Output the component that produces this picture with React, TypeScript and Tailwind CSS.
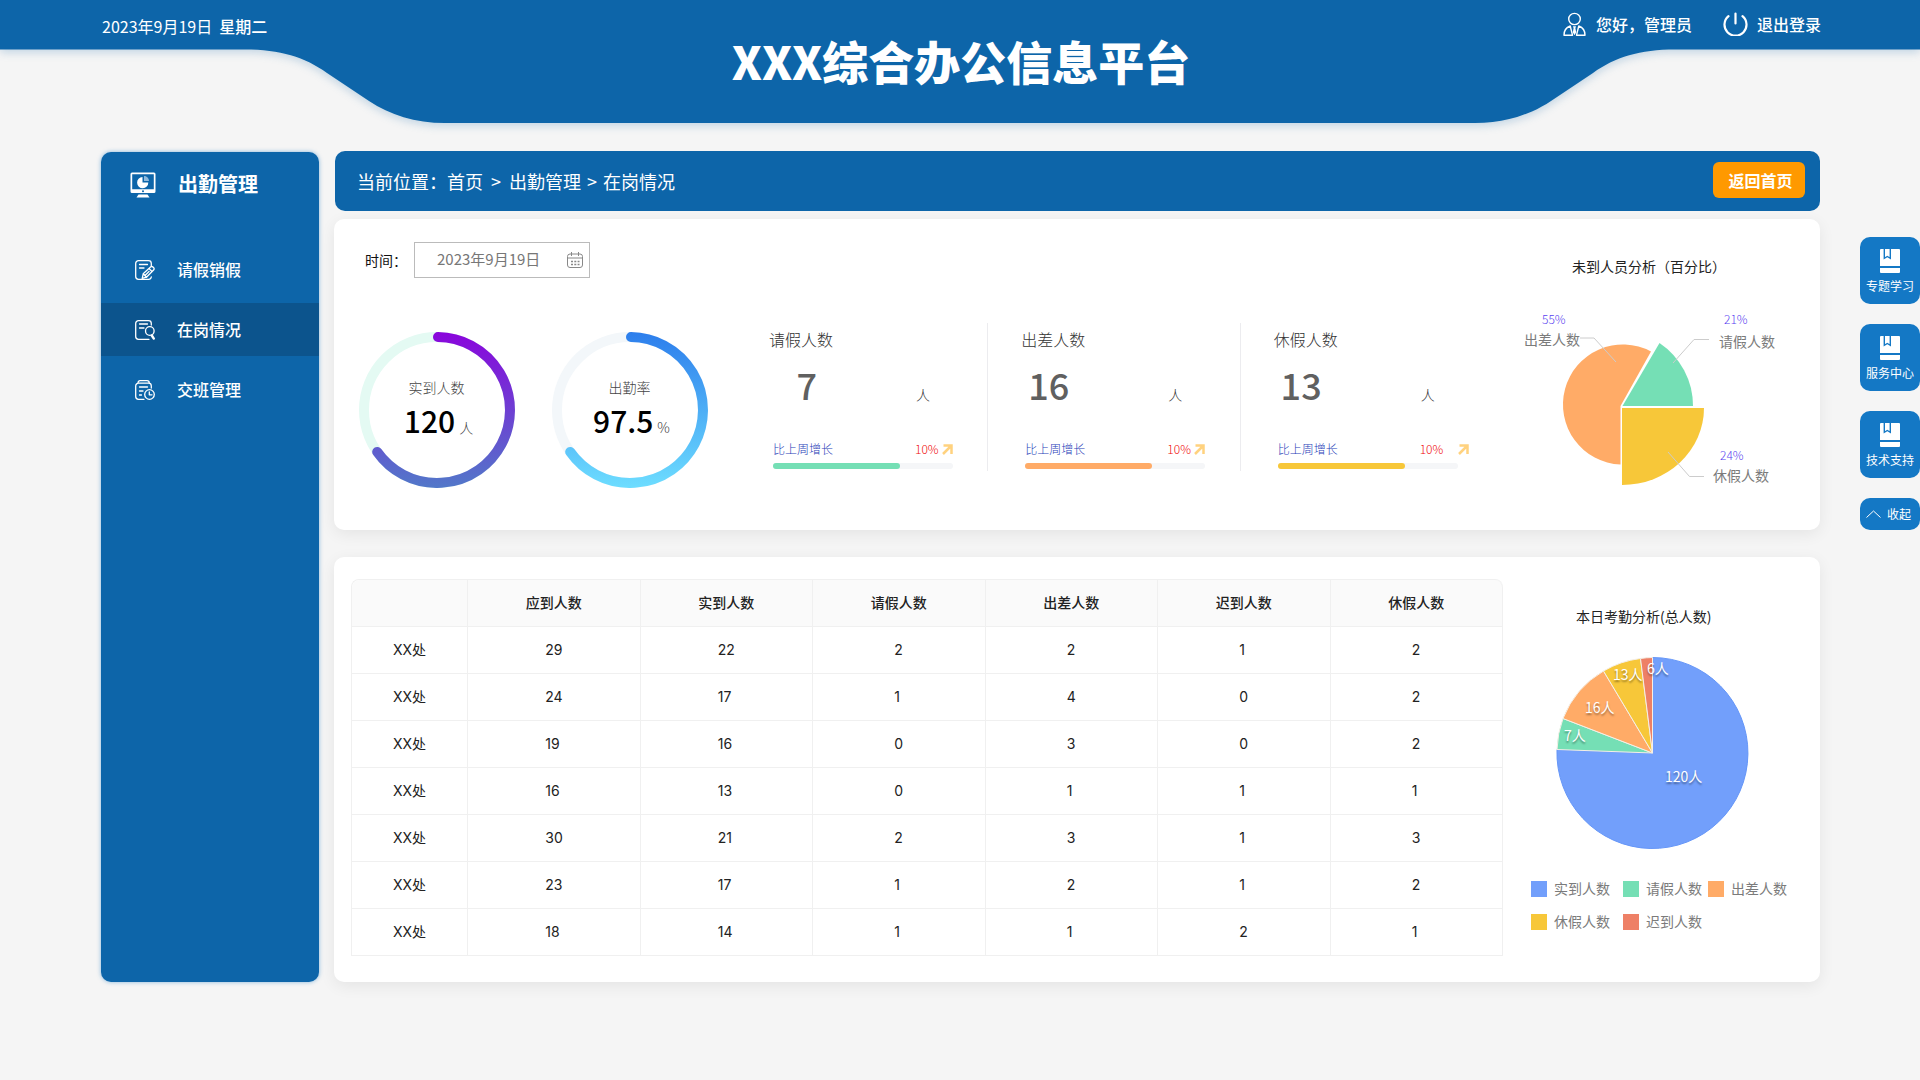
import React from "react";

const departments = [
  [29, 22, 2, 2, 1, 2],
  [24, 17, 1, 4, 0, 2],
  [19, 16, 0, 3, 0, 2],
  [16, 13, 0, 1, 1, 1],
  [30, 21, 2, 3, 1, 3],
  [23, 17, 1, 2, 1, 2],
  [18, 14, 1, 1, 2, 1],
];

const columns = ["应到人数", "实到人数", "请假人数", "出差人数", "迟到人数", "休假人数"];

const stats = [
  { label: "请假人数", value: 7, bar: "bg-[#75dfb5]", arrow: "ml-[3px]" },
  { label: "出差人数", value: 16, bar: "bg-[#ffab67]", arrow: "ml-[3px]" },
  { label: "休假人数", value: 13, bar: "bg-[#f7c739]", arrow: "ml-[15px]" },
];

const legend = [
  { label: "实到人数", color: "bg-[#729ffb]" },
  { label: "请假人数", color: "bg-[#75dfb5]" },
  { label: "出差人数", color: "bg-[#ffab67]" },
  { label: "休假人数", color: "bg-[#f7c739]" },
  { label: "迟到人数", color: "bg-[#ee8066]" },
];

function Header() {
  return (
    <header className="relative h-[123px] text-white">
      <svg
        className="absolute inset-x-0 top-0 h-[140px] w-full"
        viewBox="0 0 1920 140"
        preserveAspectRatio="none"
        aria-hidden="true"
      >
        <path
          d="M0 0H1920V49.5H1675C1640 49.5 1615 57 1593 73L1551 101C1530 115 1505 123 1475 123H445C415 123 390 115 369 101L327 73C305 57 280 49.5 245 49.5H0Z"
          fill="#0d65a9"
          style={{ filter: "drop-shadow(0 3px 4px rgba(13,101,169,0.22))" }}
        />
      </svg>
      <div className="relative flex justify-between pr-[99px] pl-[102px] text-base leading-6 font-medium">
        <p className="mt-[14px] whitespace-pre">
          <span className="font-normal">2023年9月19日</span>
          {"  星期二"}
        </p>
        <div className="mt-3 flex items-start">
          <svg className="h-6 w-[23px]" viewBox="0 0 23 24" fill="none" stroke="white" strokeWidth="1.4" strokeLinejoin="round" aria-hidden="true">
            <ellipse cx="11.5" cy="7" rx="5.8" ry="5.6" />
            <path d="M7.2 14C3 15.500 1 18.500 1 23.200H9.500L7.200 14ZM15.800 14C20 15.500 22 18.500 22 23.200H13.500L15.800 14Z" />
            <path d="M10 14.200h3l-.6 2 .8 4-1.700 3-1.700-3 .8-4Z" fill="white" stroke="none" />
          </svg>
          <span className="ml-[10px]">您好，管理员</span>
          <button className="ml-[31px] flex items-start">
            <svg className="h-6 w-[25px]" viewBox="0 0 25 24" fill="none" stroke="white" strokeWidth="2.2" strokeLinecap="round" aria-hidden="true">
              <path d="M12.500 1.500V11.500M5.500 4.200A11 11 0 1 0 19.500 4.200" />
            </svg>
            <span className="ml-[9px]">退出登录</span>
          </button>
        </div>
      </div>
      <h1 className="absolute inset-x-0 top-[26px] pl-[2px] text-center text-[46px] leading-[68px] font-black">
        XXX综合办公信息平台
      </h1>
    </header>
  );
}

function SheetIcon({ kind }: { kind: "edit" | "search" | "clock" }) {
  return (
    <svg className="size-5" viewBox="0 0 20 20" fill="none" stroke="white" strokeWidth="1.300" strokeLinecap="round" strokeLinejoin="round" aria-hidden="true">
      {kind === "edit" && (
        <>
          <path d="M16.300 6V3.500A2.800 2.800 0 0 0 13.500 .7H3.500A2.800 2.800 0 0 0 .7 3.500V16.500A2.800 2.800 0 0 0 3.500 19.300H13.500A2.800 2.800 0 0 0 16.300 17M4.500 4.500H12.500M4.500 8H9" />
          <path d="M7.200 18.300L8.200 13.800L15.800 6.800C17.200 5.800 20 8.200 18.800 9.800L11.500 17.200ZM14 8.500L17 11.500M10 15.500L14 11.500M8.200 13.800L11.500 17.200" />
        </>
      )}
      {kind === "search" && (
        <>
          <path d="M16.300 5V3.500A2.800 2.800 0 0 0 13.500 .7H3.500A2.800 2.800 0 0 0 .7 3.500V16.500A2.800 2.800 0 0 0 3.500 19.300H14M4.500 4H12.500M4.500 8H9" />
          <circle cx="14.800" cy="11" r="4.300" />
          <path d="M16.800 15.500L18.800 18.600" strokeWidth="2.400" />
        </>
      )}
      {kind === "clock" && (
        <>
          <path d="M16.300 8V6A2.800 2.800 0 0 0 13.500 3.200H3.500A2.800 2.800 0 0 0 .7 6V16.500A2.800 2.800 0 0 0 3.500 19.300H9M3 3C3 1.500 4 .7 5 .7H12C13.500 .7 14.300 1.500 14.300 3M4.500 7H12.500M4.500 11H8M4.500 15H6.500" />
          <circle cx="14.500" cy="14.500" r="4.800" />
          <path d="M14.300 12V14.800H17" />
        </>
      )}
    </svg>
  );
}

function Sidebar() {
  const items = [
    { label: "请假销假", kind: "edit" as const, active: false },
    { label: "在岗情况", kind: "search" as const, active: true },
    { label: "交班管理", kind: "clock" as const, active: false },
  ];
  return (
    <aside className="mt-px w-[218px] shrink-0 rounded-[10px] bg-[#0d65a9] text-white shadow-[0_0_4px_rgba(20,120,197,0.5)]">
      <h2 className="flex items-center pt-[17px] pl-[29px] text-xl leading-8 font-bold">
        <svg className="h-[26px] w-[26px]" viewBox="0 0 26 26" aria-hidden="true">
          <path d="M2 .5H24A1.500 1.500 0 0 1 25.500 2V19.500A1.500 1.500 0 0 1 24 21H2A1.500 1.500 0 0 1 .5 19.500V2A1.500 1.500 0 0 1 2 .5ZM2.200 2.200V17.300H23.800V2.200Z" fill="white" fillRule="evenodd" />
          <circle cx="13" cy="19.200" r="1" fill="#0d65a9" />
          <path d="M8.500 22.500H17.500L19.500 25.500H6.500Z" fill="white" />
          <path d="M12.500 5V10.500H18.300A5.600 5.600 0 1 1 12.500 5Z" fill="white" />
          <path d="M14 4V9H19A5 5 0 0 0 14 4Z" fill="#8fb9dc" />
        </svg>
        <span className="ml-[22px] pb-[2px] leading-[30px]">出勤管理</span>
      </h2>
      <nav className="mt-[42px]">
        {items.map((item) => (
          <a
            key={item.label}
            href="#"
            className={`mb-[7px] flex h-[53px] items-center pl-[34px] text-base font-medium ${item.active ? "bg-[#0c548d]" : ""}`}
          >
            <SheetIcon kind={item.kind} />
            <span className="ml-[22px] pb-[2px]">{item.label}</span>
          </a>
        ))}
      </nav>
    </aside>
  );
}

function Ring({ id, from, to, track, label, value, unit }: { id: string; from: string; to: string; track: string; label: string; value: string; unit: string }) {
  return (
    <div className="mt-[9px] grid size-[156px] shrink-0">
      <svg className="col-start-1 row-start-1 size-[156px]" viewBox="0 0 156 156" fill="none" aria-hidden="true">
        <defs>
          <linearGradient id={id} gradientUnits="userSpaceOnUse" x1="78" y1="0" x2="78" y2="156">
            <stop offset="0" stopColor={from} />
            <stop offset="1" stopColor={to} />
          </linearGradient>
        </defs>
        <circle cx="78" cy="78" r="73" stroke={track} strokeWidth="10" />
        <path d="M79 5A73 73 0 1 1 18.200 119.900" stroke={`url(#${id})`} strokeWidth="10" strokeLinecap="round" />
      </svg>
      <div className="col-start-1 row-start-1 flex flex-col items-center pt-[45px] pr-px">
        <p className="text-sm leading-5 font-light text-[#444]">{label}</p>
        <p className="mt-px flex items-baseline pl-1 text-black">
          <span className="text-[30px] leading-[44px] font-medium">{value}</span>
          <span className="ml-1 text-sm font-light text-[#444]">{unit}</span>
        </p>
      </div>
    </div>
  );
}

function AbsenceChart() {
  return (
    <figure className="w-[327px] shrink-0">
      <figcaption className="mt-[15px] pl-[79px] text-sm leading-5 text-[#222]">未到人员分析（百分比）</figcaption>
      <svg className="mt-6 h-[200px] w-[327px]" viewBox="1492 300 327 200" role="img" aria-label="未到人员分析">
        <path d="M1619.500 406V464.500A60 60 0 1 1 1650 351.500Z" fill="#ffab67" />
        <path d="M1621.500 406L1658.500 343A76 76 0 0 1 1692 406Z" fill="#75dfb5" />
        <path d="M1621 408H1703A82 77 0 0 1 1621 485Z" fill="#f7c739" />
        <path d="M1579 338H1593L1615 362M1708 339.500H1693L1672 363M1667 452L1688.500 476.500H1703" fill="none" stroke="#ccc" />
        <g className="text-xs font-light" fill="#5a3ff0">
          <text x="1541" y="324">55%</text>
          <text x="1723" y="324">21%</text>
          <text x="1719" y="460">24%</text>
        </g>
        <g className="text-sm" fill="#7b7b7b">
          <text x="1523" y="345">出差人数</text>
          <text x="1718" y="347">请假人数</text>
          <text x="1712" y="481">休假人数</text>
        </g>
      </svg>
    </figure>
  );
}

function AttendanceChart() {
  return (
    <figure className="w-[317px] shrink-0">
      <figcaption className="mt-[27px] pl-[73px] text-sm leading-5 text-[#222]">本日考勤分析(总人数)</figcaption>
      <svg className="mt-6 h-[210px] w-[317px]" viewBox="1503 650 317 210" role="img" aria-label="本日考勤分析">
        <g stroke="#f5efe6" strokeWidth="1" strokeLinejoin="round">
          <path d="M1652.500 753V657.500A95.500 95.500 0 1 1 1557 749.500Z" fill="#729ffb" stroke="#6596f8" />
          <path d="M1652.500 753L1557 749.500A95.500 95.500 0 0 1 1563 718.500Z" fill="#75dfb5" />
          <path d="M1652.500 753L1563 718.500A95.500 95.500 0 0 1 1603.500 671Z" fill="#ffab67" />
          <path d="M1652.500 753L1603.500 671A95.500 95.500 0 0 1 1640.500 658.500Z" fill="#f7c739" />
          <path d="M1652.500 753L1640.500 658.500A95.500 95.500 0 0 1 1652.500 657.500Z" fill="#ee8066" />
        </g>
        <g className="text-sm" fill="white" style={{ textShadow: "0 2px 2px rgba(0,0,0,0.4)" }}>
          <text x="1665" y="782">120人</text>
          <text x="1564" y="741">7人</text>
          <text x="1585" y="713">16人</text>
          <text x="1613" y="680">13人</text>
          <text x="1647" y="674">6人</text>
        </g>
      </svg>
      <ul className="mt-[18px] ml-7 grid grid-cols-[92px_85px_auto] gap-y-3 text-sm leading-5 text-[#7b7b7b]">
        {legend.map((item) => (
          <li key={item.label} className="flex items-center">
            <span className={`size-4 ${item.color}`} />
            <span className="ml-[7px] pb-px">{item.label}</span>
          </li>
        ))}
      </ul>
    </figure>
  );
}

function Overview() {
  return (
    <section className="-ml-px mt-2 flex rounded-[10px] bg-white pb-[30px] shadow-[0_4px_16px_rgba(0,0,0,0.07)]">
      <div className="min-w-0 flex-1 pt-[23px]">
        <div className="flex h-9 items-center pl-[31px]">
          <label htmlFor="date" className="text-sm text-[#111]">时间：</label>
          <div className="ml-[7px] flex h-9 w-44 items-center border border-[#bbb] pr-[6px] pl-[22px]">
            <input id="date" type="text" defaultValue="2023年9月19日" className="w-0 flex-1 bg-transparent pb-[2px] text-[15px] leading-6 text-[#777] outline-none" />
            <button aria-label="选择日期">
              <svg className="size-4" viewBox="0 0 16 16" fill="none" stroke="#888" aria-hidden="true">
                <rect x=".5" y="2" width="15" height="13.500" rx="2.500" />
                <path d="M.5 6H15.500M4.500 0V4M11.500 0V4" />
                <path d="M4 9.500H12.500M4 12.500H12.500" strokeWidth="1.500" strokeDasharray="2 1.300" />
              </svg>
            </button>
          </div>
        </div>
        <div className="mt-[45px] flex pl-[25px]">
          <Ring id="present" from="#8a05dc" to="#5278c9" track="#e4faf3" label="实到人数" value="120" unit="人" />
          <div className="w-[37px] shrink-0" />
          <Ring id="rate" from="#2d7eec" to="#6dddff" track="#f3f7fa" label="出勤率" value="97.5" unit="%" />
          <div className="ml-7 grid h-[148px] flex-1 grid-cols-3">
            {stats.map((stat, i) => (
              <div key={stat.label} className={i < 2 ? "border-r border-[#ececef] pl-[33px]" : "pl-[33px]"}>
                <p className="pt-1 text-base leading-6 font-light text-[#333]">{stat.label}</p>
                <p className="mt-[7px] flex items-baseline">
                  <span className="w-12 text-right text-[36px] leading-[52px] font-medium text-[#606060]">{stat.value}</span>
                  <span className="ml-[99px] text-sm font-light text-[#333]">人</span>
                </p>
                <p className="mt-[29px] ml-1 flex items-center text-xs leading-5">
                  <span className="font-light text-[#1f40b8]">比上周增长</span>
                  <span className="ml-[82px] font-light text-[#f00a0a]">10%</span>
                  <svg className={`size-[11px] shrink-0 ${stat.arrow}`} viewBox="0 0 11 11" fill="none" stroke="#ffd27f" strokeWidth="2.500" aria-hidden="true">
                    <path d="M1 10L9.500 1.500M1.500 1.500H9.500V10" />
                  </svg>
                </p>
                <div className="mt-1 ml-1 h-[6px] w-[180px] rounded-full bg-[#f5f6f8]">
                  <div className={`h-[6px] w-[127px] rounded-full ${stat.bar}`} />
                </div>
              </div>
            ))}
          </div>
        </div>
      </div>
      <div className="pt-[22px]">
        <AbsenceChart />
      </div>
    </section>
  );
}

function Departments() {
  return (
    <section className="-ml-px mt-[27px] flex rounded-[10px] bg-white pb-[26px] pl-[17px] shadow-[0_4px_16px_rgba(0,0,0,0.07)]">
      <div className="flex-1 pt-[22px]">
        <table className="w-full table-fixed border-separate border-spacing-0 rounded-t-lg border-t border-l border-[#f0f0f0] text-center font-[Inter,'Noto_Sans_CJK_SC',sans-serif] text-sm text-[#222]">
          <thead>
            <tr className="h-[47px]">
              <th className="w-[116px] rounded-tl-lg border-r border-b border-[#f0f0f0] bg-[#fafafa]" />
              {columns.map((name) => (
                <th key={name} className="border-r border-b border-[#f0f0f0] bg-[#fafafa] font-medium last:rounded-tr-lg">{name}</th>
              ))}
            </tr>
          </thead>
          <tbody>
            {departments.map((row, r) => (
              <tr key={r} className="h-[47px]">
                <td className="border-r border-b border-[#f0f0f0]">XX处</td>
                {row.map((value, c) => (
                  <td key={c} className="border-r border-b border-[#f0f0f0]">
                    <span className={value > 9 ? "inline-block w-[17px] text-left" : "inline-block w-[9px] text-left"}>{value}</span>
                  </td>
                ))}
              </tr>
            ))}
          </tbody>
        </table>
      </div>
      <div className="pt-[22px]">
        <AttendanceChart />
      </div>
    </section>
  );
}

function QuickLinks() {
  return (
    <nav className="absolute top-[237px] right-0 flex w-[60px] flex-col gap-5 text-xs text-white">
      {["专题学习", "服务中心", "技术支持"].map((label) => (
        <a key={label} href="#" className="flex h-[67px] flex-col items-center rounded-[10px] bg-[#1478c5] pt-3">
          <svg className="h-6 w-5" viewBox="0 0 20 24" aria-hidden="true">
            <path d="M1 0H19A1 1 0 0 1 20 1V17H0V1A1 1 0 0 1 1 0ZM0 19H20V23A1 1 0 0 1 19 24H1A1 1 0 0 1 0 23Z" fill="white" />
            <path d="M4.300 0V9.300L7.300 7.500L10.300 9.300V0" fill="none" stroke="#1478c5" strokeWidth="1.400" />
          </svg>
          <span className="mt-1 leading-[18px]">{label}</span>
        </a>
      ))}
      <button className="flex h-8 items-center rounded-[10px] bg-[#1478c5] pl-[6px]">
        <svg className="h-2 w-[15px]" viewBox="0 0 15 8" fill="none" stroke="white" aria-hidden="true">
          <path d="M.5 7.500L7.500 1L14.500 7.500" />
        </svg>
        <span className="ml-[6px]">收起</span>
      </button>
    </nav>
  );
}

export default function App() {
  return (
    <div className="relative min-h-screen bg-[#f5f5f5] font-['Noto_Sans_CJK_SC',sans-serif]">
      <Header />
      <div className="mt-7 flex gap-4 pr-[100px] pl-[101px]">
        <Sidebar />
        <main className="min-w-0 flex-1">
          <div className="flex h-[60px] items-center justify-between rounded-[10px] bg-[#0d65a9] pr-[15px] pl-[22px] text-white">
            <nav aria-label="面包屑" className="flex text-lg whitespace-pre">
              <span>当前位置：</span>
              <a href="#">首页</a>
              <span className="mx-[8px]">{">"}</span>
              <a href="#">出勤管理</a>
              <span className="mx-[6px]">{">"}</span>
              <span>在岗情况</span>
            </nav>
            <button className="mb-[2px] h-9 w-[92px] rounded-md bg-[#ff9900] pl-[3px] text-base font-bold">返回首页</button>
          </div>
          <Overview />
          <Departments />
        </main>
      </div>
      <QuickLinks />
    </div>
  );
}
